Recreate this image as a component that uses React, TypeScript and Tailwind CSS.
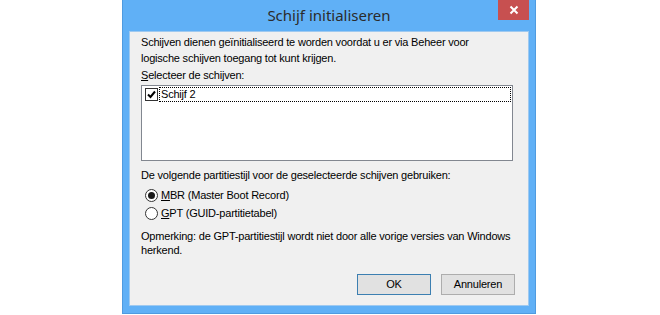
import { useState } from 'react'

function CheckBox({ checked }: { checked: boolean }) {
  return (
    <span className="w-[13px] h-[13px] border border-[#333333] bg-white flex items-center justify-center shrink-0">
      {checked && (
        <svg width="9" height="9" viewBox="0 0 9 9">
          <path d="M1 4.5 L3.5 7 L8 1.5" stroke="#000" strokeWidth="2" fill="none" />
        </svg>
      )}
    </span>
  )
}

function Radio({ checked }: { checked: boolean }) {
  return (
    <span className="w-[13px] h-[13px] rounded-full border border-[#333333] bg-white flex items-center justify-center shrink-0">
      {checked && <span className="w-[7px] h-[7px] rounded-full bg-[#1a1a1a]" />}
    </span>
  )
}

export default function App() {
  const [style, setStyle] = useState<'mbr' | 'gpt'>('mbr')

  return (
    <div className="w-[660px] h-[315px] bg-white overflow-hidden font-['Liberation_Sans',Arial,sans-serif] text-[11px] tracking-[-0.2px] text-black">
      <div className="ml-[122px] w-[414px] h-[314px] bg-[#60b0f6] border-x border-b border-[#4f9be0] flex flex-col">
        <div className="h-[31px] flex items-center relative shrink-0">
          <div className="flex-1 text-center text-[15px] tracking-normal text-[#2b2b2b] font-['Noto_Sans',sans-serif]">
            Schijf initialiseren
          </div>
          <button className="absolute right-[6px] top-0 w-[31px] h-[20px] bg-[#c75050] flex items-center justify-center">
            <svg width="10" height="10" viewBox="0 0 10 10">
              <path d="M1.5 1.5 L8.5 8.5 M8.5 1.5 L1.5 8.5" stroke="#fff" strokeWidth="2" />
            </svg>
          </button>
        </div>

        <div className="mx-[6px] h-[275px] shrink-0 bg-[#f0f0f0] border border-[#9ec9f0] px-[11px] pt-[2px] flex flex-col whitespace-nowrap">
          <p className="leading-[16px] shrink-0">
            Schijven dienen geïnitialiseerd te worden voordat u er via Beheer voor
            <br />
            logische schijven toegang tot kunt krijgen.
          </p>

          <p className="mt-[1px] leading-[16px] shrink-0">
            <span className="underline">S</span>electeer de schijven:
          </p>

          <div className="mt-[2px] mr-[4px] h-[76px] shrink-0 bg-white border border-[#828790] p-[1px]">
            <div className="flex items-center gap-[1px] pl-[2px]">
              <CheckBox checked />
              <span className="flex-1 border border-dotted border-black leading-[13px] pl-[1px]">Schijf 2</span>
            </div>
          </div>

          <p className="mt-[7px] leading-[15px] shrink-0">
            De volgende partitiestijl voor de geselecteerde schijven gebruiken:
          </p>

          <div className="mt-[3px] flex flex-col pl-[4px] shrink-0">
            <label className="h-[18px] flex items-center gap-[3px] leading-[15px]" onClick={() => setStyle('mbr')}>
              <Radio checked={style === 'mbr'} />
              <span>
                <span className="underline">M</span>BR (Master Boot Record)
              </span>
            </label>
            <label className="h-[18px] flex items-center gap-[3px] leading-[15px]" onClick={() => setStyle('gpt')}>
              <Radio checked={style === 'gpt'} />
              <span>
                <span className="underline">G</span>PT (GUID-partitietabel)
              </span>
            </label>
          </div>

          <p className="mt-[7px] leading-[14px] shrink-0">
            Opmerking: de GPT-partitiestijl wordt niet door alle vorige versies van Windows
            <br />
            herkend.
          </p>

          <div className="mt-auto mb-[10px] flex justify-end gap-[10px] pr-[2px] shrink-0">
            <button className="w-[74px] h-[21px] bg-[#e1e1e1] border border-[#3c7fb1] text-[11px]">OK</button>
            <button className="w-[74px] h-[21px] bg-[#e1e1e1] border border-[#adadad] text-[11px]">Annuleren</button>
          </div>
        </div>
      </div>
    </div>
  )
}
